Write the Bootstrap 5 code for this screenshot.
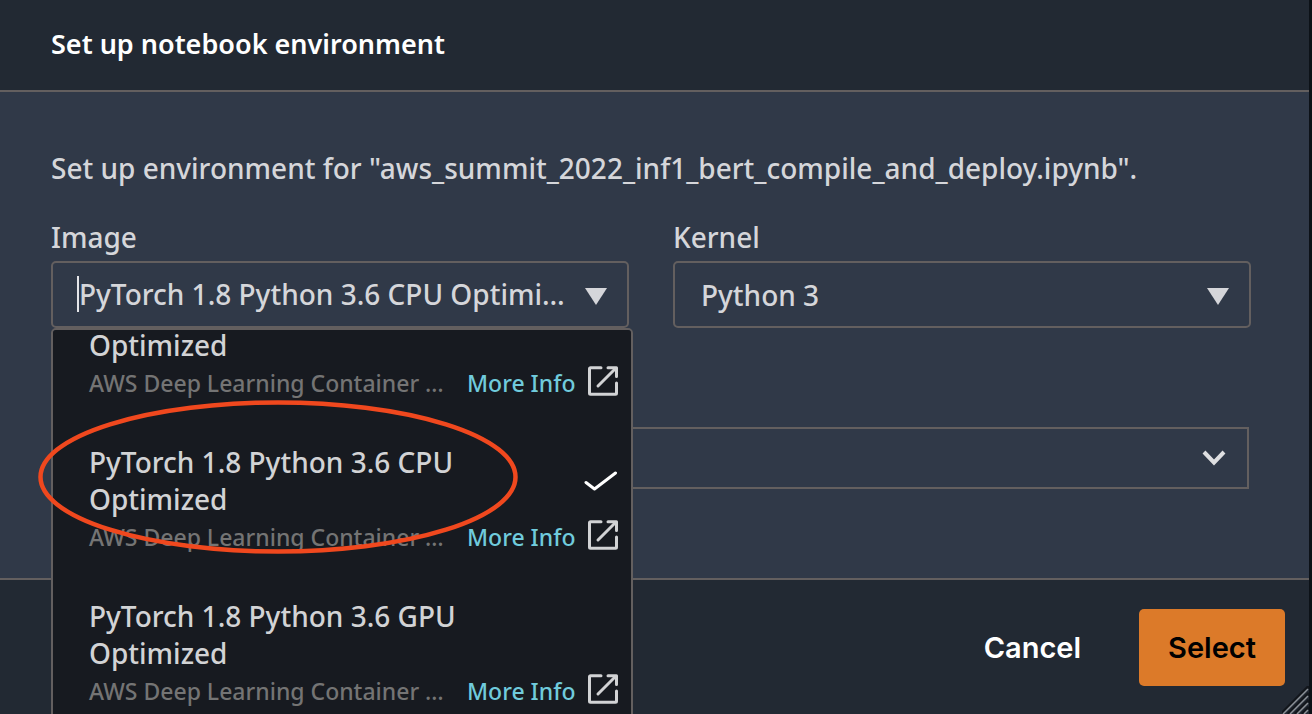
<!DOCTYPE html>
<html lang="en">
<head>
<meta charset="utf-8">
<meta name="viewport" content="width=device-width, initial-scale=1">
<title>Set up notebook environment</title>
<link rel="stylesheet" href="https://cdn.jsdelivr.net/npm/bootstrap@5.3.0/dist/css/bootstrap.min.css">
<style>
  :root { --edge: #635f5f; --panel: #222933; --surface: #303948; --ink: #d5d6da; }
  body { background: #0c1117; color: var(--ink); font-family: "Noto Sans", "Open Sans", sans-serif; font-size: 28px; font-weight: 500; line-height: 37px; }
  .dialog { margin-right: 3px; overflow: hidden; background: var(--surface); }
  .dialog-head { background: var(--panel); border-bottom: 2px solid var(--edge); padding: 25px 51px 28px; }
  .dialog-head h1 { font-size: 27px; line-height: 37px; font-weight: 600; color: #fff; }
  .dialog-main { padding: 58px 58px 89px 51px; }
  .fields { display: grid; grid-template-columns: 1fr 1fr; column-gap: 44px; margin-top: 32px; }
  .fields label { margin-bottom: 5px; }
  .field { height: 67px; border: 2px solid var(--edge); border-radius: 5px; background: transparent; color: var(--ink); }
  .combo { padding: 3px 20px 0 24px; }
  .combo input { background: none; border: 0; outline: 0; color: inherit; font: inherit; padding: 0 0 4px; min-width: 0; text-overflow: ellipsis; }
  .caret-bar { width: 2px; height: 36px; margin-bottom: 4px; background: #e4e5e8; }
  select.field { appearance: none; font: inherit; padding: 2px 26px 0; }
  .arrow { right: 22px; pointer-events: none; }
  .kernel-wrap .arrow { margin-top: 3px; }
  .instance { margin-top: 99px; margin-right: 2px; }
  .instance .field { height: 62px; border-radius: 0; }
  .menu { top: 100%; left: 0; width: calc(100% + 4px); height: 420px; overflow-y: auto; scrollbar-width: none; z-index: 5; background: #171a20; border: 2px solid var(--edge); border-radius: 5px; color: #d2d3d5; }
  .menu::-webkit-scrollbar { display: none; }
  .menu ul { padding-bottom: 60px; }
  .menu li { padding: 21px 13px 21px 36px; }
  .title-text { width: 400px; }
  .meta { font-size: 23px; line-height: 38px; }
  .meta svg { margin-bottom: 5px; }
  .meta-text { width: 357px; color: #747474; }
  .meta a { color: #70cbdc; text-decoration: none; margin-left: 21px; }
  .ring { top: 138px; left: -14px; z-index: 6; pointer-events: none; }
  .dialog-foot { background: var(--panel); border-top: 2px solid var(--edge); padding: 29px 24px 28px; }
  .dialog-foot button { height: 77px; border: 0; border-radius: 5px; padding: 0 29px; font-family: Inter, sans-serif; font-size: 29px; font-weight: 600; }
  .dialog-foot .cancel { background: none; color: #fff; margin-right: 29px; }
  .dialog-foot .choose { background: #dc7a29; color: #000; }
  .grip { right: 0; bottom: 0; }
</style>
</head>
<body>
<main class="dialog d-flex flex-column min-vh-100 position-relative" role="dialog" aria-labelledby="dialogTitle">
  <header class="dialog-head"><h1 class="m-0" id="dialogTitle">Set up notebook environment</h1></header>
  <section class="dialog-main">
    <p class="m-0">Set up environment for "aws_summit_2022_inf1_bert_compile_and_deploy.ipynb".</p>
    <div class="fields">
      <div>
        <label class="d-block" for="image">Image</label>
        <div class="position-relative">
          <div class="field combo d-flex align-items-center">
            <span class="caret-bar"></span>
            <input class="flex-grow-1" id="image" role="combobox" aria-expanded="true" aria-controls="imageMenu" value="PyTorch 1.8 Python 3.6 CPU Optimized">
            <svg class="ms-2 flex-shrink-0" width="22" height="17" viewBox="0 0 22 17"><path d="M0 0h22L11 17z" fill="#d5d6da"/></svg>
          </div>
          <div class="menu position-absolute" id="imageMenu">
            <ul class="list-unstyled m-0">
              <li>
                <div class="title-text">Optimized</div>
                <div class="meta d-flex align-items-center"><span class="meta-text">AWS Deep Learning Container …</span><a href="#">More Info</a><svg class="ms-auto" width="30" height="30"><use href="#external"/></svg></div>
              </li>
              <li>
                <div class="d-flex align-items-center justify-content-between"><div class="title-text">PyTorch 1.8 Python 3.6 CPU Optimized</div><svg width="34" height="20" viewBox="0 0 34 20"><path d="M2 11.500 10.500 18 31.500 2" fill="none" stroke="#fff" stroke-width="3" stroke-linecap="round" stroke-linejoin="round"/></svg></div>
                <div class="meta d-flex align-items-center"><span class="meta-text">AWS Deep Learning Container …</span><a href="#">More Info</a><svg class="ms-auto" width="30" height="30"><use href="#external"/></svg></div>
              </li>
              <li>
                <div class="title-text">PyTorch 1.8 Python 3.6 GPU Optimized</div>
                <div class="meta d-flex align-items-center"><span class="meta-text">AWS Deep Learning Container …</span><a href="#">More Info</a><svg class="ms-auto" width="30" height="30"><use href="#external"/></svg></div>
              </li>
            </ul>
          </div>
          <svg class="ring position-absolute" width="482" height="156" viewBox="0 0 482 156"><ellipse cx="241" cy="78" rx="237.500" ry="74.500" fill="none" stroke="#f0481e" stroke-width="4.500"/></svg>
        </div>
      </div>
      <div>
        <label class="d-block" for="kernel">Kernel</label>
        <div class="kernel-wrap position-relative d-flex align-items-center">
          <select class="field w-100" id="kernel"><option>Python 3</option></select>
          <svg class="arrow position-absolute" width="22" height="17" viewBox="0 0 22 17"><path d="M0 0h22L11 17z" fill="#d5d6da"/></svg>
        </div>
      </div>
    </div>
    <div class="instance position-relative d-flex align-items-center">
      <select class="field w-100" aria-label="Instance type"><option></option></select>
      <svg class="arrow position-absolute" width="26" height="18" viewBox="0 0 26 18"><path d="M3 3l10 10.500L23 3" fill="none" stroke="#dedfe1" stroke-width="4"/></svg>
    </div>
  </section>
  <footer class="dialog-foot flex-grow-1 d-flex align-items-start justify-content-end">
    <button type="button" class="cancel">Cancel</button>
    <button type="button" class="choose">Select</button>
  </footer>
  <svg class="grip position-absolute" width="27" height="28" viewBox="0 0 27 28"><path d="M-1 28 27 0M6 28 27 7M13 28 27 14M20 28 27 21" stroke="#12161c" stroke-width="3"/><path d="M1 28 26 3M8 28 26 10M15 28 26 17M22 28 26 24" stroke="#8b9097" stroke-width="1.500"/></svg>
</main>
<svg class="d-none">
  <symbol id="external" viewBox="0 0 30 30"><g fill="none" stroke="#d2d3d5" stroke-width="3" stroke-linecap="round" stroke-linejoin="round"><path d="M13 1.800H2.500a1 1 0 0 0-1 1v24.500a1 1 0 0 0 1 1h25a1 1 0 0 0 1-1V17"/><path d="M20 1.800h8.500V10.500"/><path d="M10 20 27 3"/></g></symbol>
</svg>
<script src="https://cdn.jsdelivr.net/npm/bootstrap@5.3.0/dist/js/bootstrap.bundle.min.js"></script>
<script>
  // Open the list part way down its first entry.
  document.getElementById('imageMenu').scrollTop = 24;
</script>
</body>
</html>
